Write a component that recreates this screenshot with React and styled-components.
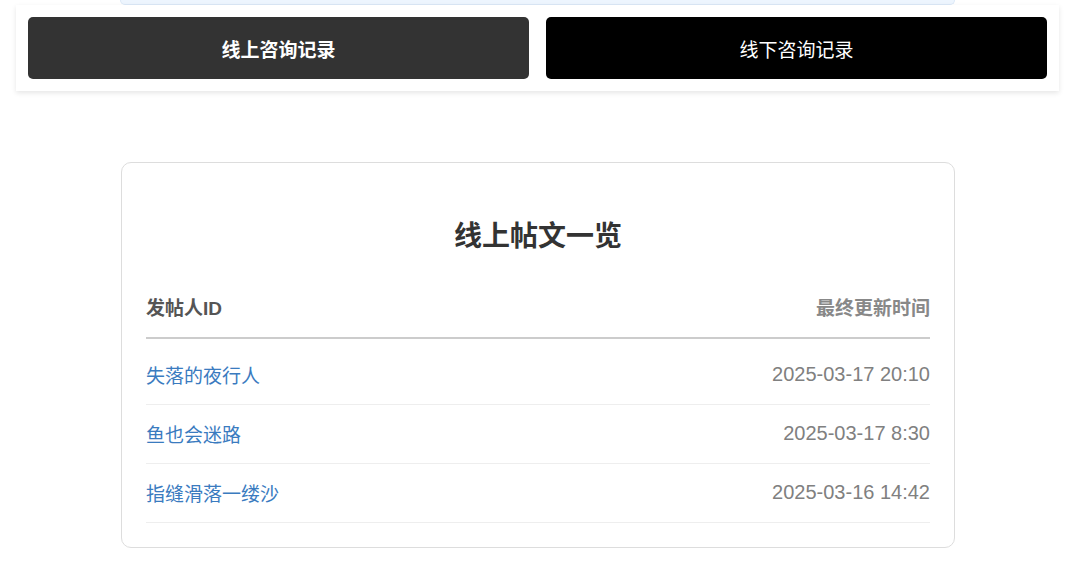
import React from 'react';
import styled, { createGlobalStyle } from 'styled-components';

const posts = [
  { id: '失落的夜行人', time: '2025-03-17 20:10' },
  { id: '鱼也会迷路', time: '2025-03-17 8:30' },
  { id: '指缝滑落一缕沙', time: '2025-03-16 14:42' },
];

const GlobalStyle = createGlobalStyle`
  html, body {
    margin: 0;
    padding: 0;
    background: #ffffff;
    font-family: "Liberation Sans", "Noto Sans CJK SC", sans-serif;
  }
  * {
    box-sizing: border-box;
  }
`;

const App = () => {
  return (
    <Page>
      <GlobalStyle />
      <Notice />
      <Toolbar>
        <TabButton $active>线上咨询记录</TabButton>
        <TabButton>线下咨询记录</TabButton>
      </Toolbar>

      <Card>
        <Title>线上帖文一览</Title>
        <Table>
          <thead>
            <tr>
              <HeadCell>发帖人ID</HeadCell>
              <HeadCell $right>最终更新时间</HeadCell>
            </tr>
          </thead>
          <tbody>
            {posts.map((p) => (
              <Row key={p.id}>
                <Cell>
                  <PostLink href="#">{p.id}</PostLink>
                </Cell>
                <Cell $right>{p.time}</Cell>
              </Row>
            ))}
          </tbody>
        </Table>
      </Card>
    </Page>
  );
};

export default App;

const Page = styled.div`
  width: 1080px;
  min-height: 581px;
  display: flex;
  flex-direction: column;
  align-items: flex-start;
`;

const Notice = styled.div`
  width: 835px;
  height: 5px;
  margin-left: 120px;
  background: #edf5fe;
  border: 1px solid #dbe8f7;
  border-top: none;
  border-radius: 0 0 8px 8px;
`;

const Toolbar = styled.div`
  width: 1043px;
  margin-left: 16px;
  padding: 12px;
  display: flex;
  gap: 17px;
  background: #ffffff;
  box-shadow: 0 2px 5px rgba(0, 0, 0, 0.1);
`;

const TabButton = styled.button`
  flex: 1;
  height: 62px;
  border: none;
  border-radius: 5px;
  background: ${(p) => (p.$active ? '#333333' : '#000000')};
  color: #ffffff;
  font-family: "Liberation Sans", "Noto Sans CJK SC", sans-serif;
  font-size: 19px;
  font-weight: ${(p) => (p.$active ? 700 : 400)};
  cursor: pointer;
`;

const Card = styled.div`
  width: 834px;
  margin: 71px 0 0 121px;
  padding: 52px 24px 24px;
  border: 1px solid #dddddd;
  border-radius: 10px;
  background: #ffffff;
`;

const Title = styled.h2`
  margin: 0 0 38px;
  text-align: center;
  font-size: 28px;
  font-weight: 700;
  color: #333333;
  line-height: 44px;
`;

const Table = styled.table`
  width: 100%;
  border-collapse: collapse;
`;

const HeadCell = styled.th`
  padding: 0 0 16px;
  text-align: ${(p) => (p.$right ? 'right' : 'left')};
  font-size: 19px;
  font-weight: 700;
  color: ${(p) => (p.$right ? '#888888' : '#555555')};
  border-bottom: 2px solid #cccccc;
  line-height: 24px;
`;

const Row = styled.tr`
  &:first-child td {
    height: 66px;
    padding-top: 7px;
  }
`;

const Cell = styled.td`
  height: 59px;
  padding: 0;
  text-align: ${(p) => (p.$right ? 'right' : 'left')};
  font-size: 20px;
  color: #808080;
  border-bottom: 1px solid #eeeeee;
`;

const PostLink = styled.a`
  color: #3a7bbf;
  text-decoration: none;
  font-size: 19px;

  &:hover {
    text-decoration: underline;
  }
`;
